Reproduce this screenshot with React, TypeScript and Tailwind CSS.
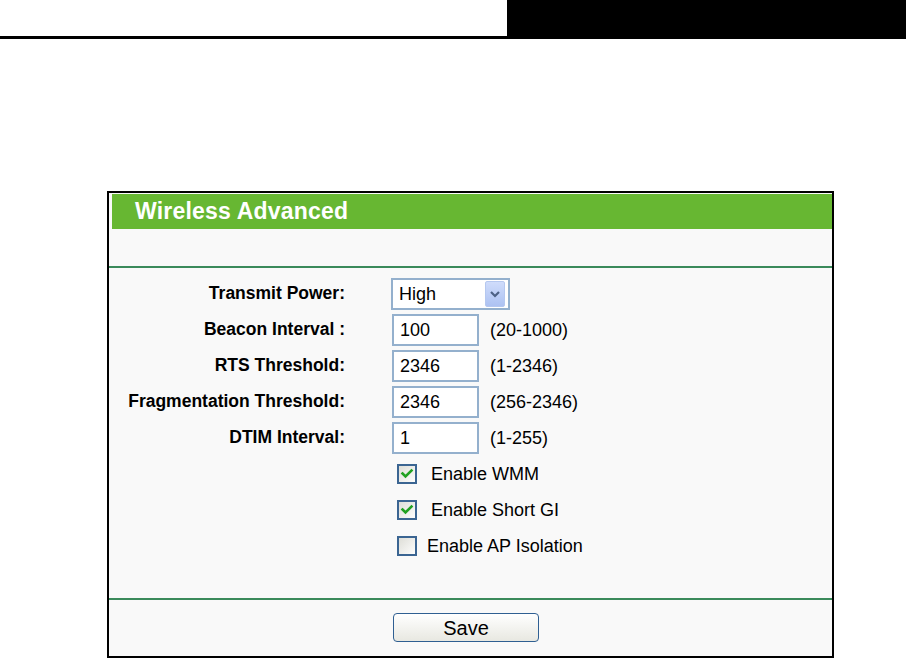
import React from 'react';

const font = { fontFamily: '"Liberation Sans", Arial, sans-serif' };

function Label({ children }: { children: React.ReactNode }) {
  return (
    <div className="w-[236px] shrink-0 text-right text-[17.5px] font-bold text-black leading-none">
      {children}
    </div>
  );
}

function TextBox({ value }: { value: string }) {
  return (
    <div className="ml-[47px] flex h-[32px] w-[87px] items-center border-2 border-[#94b0cd] bg-white pl-[6px] text-[18px] text-black">
      {value}
    </div>
  );
}

function Range({ children }: { children: React.ReactNode }) {
  return <span className="ml-[11px] text-[18px] text-black">{children}</span>;
}

function Check({ checked, label }: { checked: boolean; label: string }) {
  return (
    <div className="flex h-[36px] items-center pl-[288px]">
      <svg width="20" height="20" viewBox="0 0 20 20">
        <defs>
          <linearGradient id={'cb' + label.length} x1="0" y1="0" x2="1" y2="1">
            <stop offset="0" stopColor="#dcdcd5" />
            <stop offset="1" stopColor="#ffffff" />
          </linearGradient>
        </defs>
        <rect x="1" y="1" width="18" height="18" fill={'url(#cb' + label.length + ')'} stroke="#3b6592" strokeWidth="2" />
        {checked && (
          <path d="M5.5 9.5 L8.5 12.5 L14.5 6.5" fill="none" stroke="#21a121" strokeWidth="2.6" strokeLinecap="square" />
        )}
      </svg>
      <span className={(checked ? 'ml-[14px]' : 'ml-[10px]') + ' text-[18px] text-black'}>{label}</span>
    </div>
  );
}

export default function App() {
  return (
    <div className="relative h-[658px] w-[906px] overflow-hidden bg-white" style={font}>
      {/* page header strip */}
      <div className="flex h-[39px]">
        <div className="w-[507px] border-b-[3px] border-black" />
        <div className="flex-1 bg-black" />
      </div>

      {/* panel */}
      <div className="ml-[107px] mt-[152px] flex h-[467px] w-[727px] flex-col border-2 border-black bg-[#f9f9f9]">
        <div className="ml-[3px] mt-px flex h-[35px] items-center bg-[#67b732] pl-[23px] text-[23px] font-bold tracking-[0.2px] text-white">
          Wireless Advanced
        </div>
        <div className="h-[37px]" />
        <div className="h-[2px] bg-[#3a8a5b]" />

        <div className="flex flex-col gap-[4px] pt-[10px]">
          <div className="flex h-[32px] items-center">
            <Label>Transmit Power:</Label>
            <div className="ml-[46px] flex h-[32px] w-[119px] items-center justify-between border-2 border-[#94b0cd] bg-white pl-[6px] pr-[3px] text-[18px] text-black">
              <span>High</span>
              <div className="flex h-[26px] w-[20px] items-center justify-center rounded-[2px] border border-[#b5c8f0] bg-gradient-to-b from-[#cfdcfb] to-[#adc2f2]">
                <svg width="12" height="10" viewBox="0 0 12 10">
                  <path d="M2 3 L6 7 L10 3" fill="none" stroke="#4d6185" strokeWidth="2.2" />
                </svg>
              </div>
            </div>
          </div>
          <div className="flex h-[32px] items-center">
            <Label>Beacon Interval :</Label>
            <TextBox value="100" />
            <Range>(20-1000)</Range>
          </div>
          <div className="flex h-[32px] items-center">
            <Label>RTS Threshold:</Label>
            <TextBox value="2346" />
            <Range>(1-2346)</Range>
          </div>
          <div className="flex h-[32px] items-center">
            <Label>Fragmentation Threshold:</Label>
            <TextBox value="2346" />
            <Range>(256-2346)</Range>
          </div>
          <div className="flex h-[32px] items-center">
            <Label>DTIM Interval:</Label>
            <TextBox value="1" />
            <Range>(1-255)</Range>
          </div>
        </div>

        <div className="mt-[2px] flex flex-col">
          <Check checked label="Enable WMM" />
          <Check checked label="Enable Short GI" />
          <Check checked={false} label="Enable AP Isolation" />
        </div>

        <div className="mt-[34px] h-[2px] bg-[#3a8a5b]" />

        <div className="mt-[13px] pl-[284px]">
          <button className="flex h-[29px] w-[146px] items-center justify-center rounded-[4px] border border-[#2f5f92] bg-gradient-to-b from-white to-[#e8e8e1] text-[20px] text-black">
            Save
          </button>
        </div>
      </div>
    </div>
  );
}
